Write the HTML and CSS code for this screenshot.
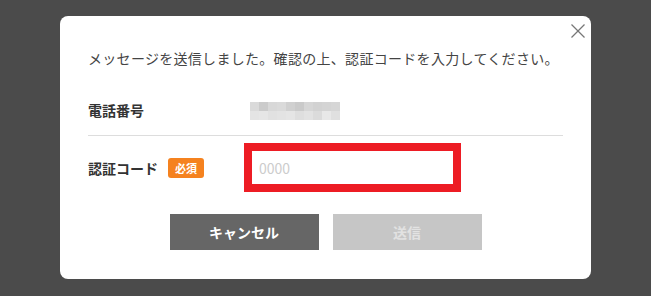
FILE: index.html
```html
<!DOCTYPE html>
<html lang="ja">
<head>
  <meta charset="UTF-8" />
  <meta name="viewport" content="width=device-width, initial-scale=1.0" />
  <title>認証コード入力</title>
  <link rel="stylesheet" href="styles.css">
</head>
<body>

  <div class="modal">
    <button class="modal-close" aria-label="閉じる">
      <svg viewBox="0 0 14 14" width="14" height="14">
        <line x1="0.5" y1="0.5" x2="13.5" y2="13.5"></line>
        <line x1="13.5" y1="0.5" x2="0.5" y2="13.5"></line>
      </svg>
    </button>

    <p class="modal-message">メッセージを送信しました。確認の上、認証コードを入力してください。</p>

    <div class="form-row phone-row">
      <div class="form-label">電話番号</div>
      <div class="phone-mosaic">
        <span></span><span></span><span></span><span></span><span></span>
        <span></span><span></span><span></span><span></span><span></span>
        <span></span><span></span><span></span><span></span><span></span>
        <span></span><span></span><span></span><span></span><span></span>
      </div>
    </div>

    <div class="form-row code-row">
      <div class="form-label">
        認証コード
        <span class="badge-required">必須</span>
      </div>
      <input class="code-input" type="text" placeholder="0000">
    </div>

    <div class="modal-buttons">
      <button class="btn btn-cancel">キャンセル</button>
      <button class="btn btn-submit" disabled>送信</button>
    </div>
  </div>

</body>
</html>
```

FILE: styles.css
```css
body {
  margin: 0;
  background: #4b4b4b;
  font-family: "Noto Sans CJK JP", "Noto Sans", sans-serif;
  color: #333;
}

.modal {
  position: relative;
  margin: 16px 60px 0;
  height: 263px;
  box-sizing: border-box;
  padding: 32px 28px 29px;
  background: #fff;
  border-radius: 8px;
}

.modal-close {
  position: absolute;
  top: 8px;
  right: 6px;
  width: 14px;
  height: 14px;
  padding: 0;
  border: none;
  background: none;
  cursor: pointer;
}

.modal-close svg {
  display: block;
}

.modal-close line {
  stroke: #777;
  stroke-width: 1.2;
}

.modal-message {
  margin: 0;
  font-size: 14px;
  line-height: 20px;
  letter-spacing: 0.3px;
  white-space: nowrap;
  color: #444;
}

.form-row {
  display: flex;
  align-items: center;
}

.phone-row {
  margin-top: 32px;
  padding-bottom: 15px;
  border-bottom: 1px solid #ddd;
}

.form-label {
  display: flex;
  align-items: center;
  width: 162px;
  font-size: 14px;
  line-height: 20px;
  font-weight: bold;
  color: #333;
}

.code-row {
  padding-top: 7px;
}

.code-row .form-label {
  width: 156px;
}

.badge-required {
  margin-left: 10px;
  width: 36px;
  height: 20px;
  line-height: 20px;
  text-align: center;
  font-size: 11px;
  font-weight: bold;
  color: #fff;
  background: #f5821f;
  border-radius: 3px;
}

/* blurred phone number */
.phone-mosaic {
  display: grid;
  grid-template-columns: repeat(10, 9px);
  grid-template-rows: 9px 9px;
  margin-top: 1px;
}

.phone-mosaic span:nth-child(1) { background: #dadada; }
.phone-mosaic span:nth-child(2) { background: #cbcbcb; }
.phone-mosaic span:nth-child(3) { background: #d8d8d8; }
.phone-mosaic span:nth-child(4) { background: #dadada; }
.phone-mosaic span:nth-child(5) { background: #d0d0d0; }
.phone-mosaic span:nth-child(6) { background: #cacaca; }
.phone-mosaic span:nth-child(7) { background: #d6d6d6; }
.phone-mosaic span:nth-child(8) { background: #d2d2d2; }
.phone-mosaic span:nth-child(9) { background: #d4d4d4; }
.phone-mosaic span:nth-child(10) { background: #d6d6d6; }
.phone-mosaic span:nth-child(11) { background: #e4e4e4; }
.phone-mosaic span:nth-child(12) { background: #e6e6e6; }
.phone-mosaic span:nth-child(13) { background: #e1e1e1; }
.phone-mosaic span:nth-child(14) { background: #e3e3e3; }
.phone-mosaic span:nth-child(15) { background: #e5e5e5; }
.phone-mosaic span:nth-child(16) { background: #dedede; }
.phone-mosaic span:nth-child(17) { background: #e2e2e2; }
.phone-mosaic span:nth-child(18) { background: #dbdbdb; }
.phone-mosaic span:nth-child(19) { background: #e8e8e8; }
.phone-mosaic span:nth-child(20) { background: #e0e0e0; }

.code-input {
  width: 217px;
  height: 49px;
  box-sizing: border-box;
  padding: 0 7px;
  border: 8px solid #ed1c24;
  outline: none;
  font-family: inherit;
  font-size: 14px;
  color: #333;
}

.code-input::placeholder {
  color: #ccc;
}

.modal-buttons {
  display: flex;
  justify-content: center;
  gap: 14px;
  margin-top: 22px;
}

.btn {
  width: 149px;
  height: 36px;
  border: none;
  font-family: inherit;
  font-size: 14px;
  font-weight: bold;
  cursor: pointer;
}

.btn-cancel {
  background: #666;
  color: #fff;
}

.btn-submit {
  background: #c6c6c6;
  color: #e2e2e2;
  cursor: default;
}
```
